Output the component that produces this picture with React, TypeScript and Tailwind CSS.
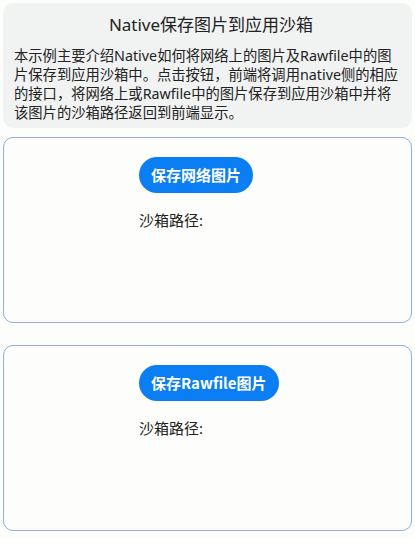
import React, { useState } from "react";

const font = { fontFamily: '"Noto Sans", "Noto Sans CJK SC", sans-serif' };

interface SaveCardProps {
  label: string;
  onSave: () => void;
  path: string;
}

const SaveCard: React.FC<SaveCardProps> = ({ label, onSave, path }) => (
  <div className="mx-[3px] h-[186px] rounded-[10px] border border-[#8eaede] bg-[#fdfdfb] pl-[135px] pt-[19px]">
    <button
      onClick={onSave}
      className="h-[36px] rounded-full bg-[#0a7ef2] px-[12px] text-[15px] font-bold text-white"
      style={{ fontFamily: '"Noto Sans CJK SC", sans-serif' }}
    >
      {label}
    </button>
    <div className="mt-[17px] text-[15px] leading-[20px] text-[#222]">沙箱路径:{path}</div>
  </div>
);

export default function App() {
  const [netPath, setNetPath] = useState("");
  const [rawPath, setRawPath] = useState("");

  return (
    <div className="h-[539px] w-[415px] overflow-hidden bg-[#fdfdfb]" style={font}>
      {/* intro */}
      <div className="mx-[3px] mt-[3px] rounded-[10px] bg-[#f1f2f2] pb-[6px] pl-[11px] pr-[4px] pt-[10px]">
        <h1 className="text-center text-[17px] leading-[24px] text-[#222]">Native保存图片到应用沙箱</h1>
        <p className="mt-[9px] whitespace-nowrap text-[14.3px] leading-[19px] text-[#222]">
          本示例主要介绍Native如何将网络上的图片及Rawfile中的图
          <br />
          片保存到应用沙箱中。点击按钮，前端将调用native侧的相应
          <br />
          的接口，将网络上或Rawfile中的图片保存到应用沙箱中并将
          <br />
          该图片的沙箱路径返回到前端显示。
        </p>
      </div>

      <div className="mt-[9px] flex flex-col gap-[22px]">
        <SaveCard label="保存网络图片" path={netPath} onSave={() => setNetPath("")} />
        <SaveCard label="保存Rawfile图片" path={rawPath} onSave={() => setRawPath("")} />
      </div>
    </div>
  );
}
